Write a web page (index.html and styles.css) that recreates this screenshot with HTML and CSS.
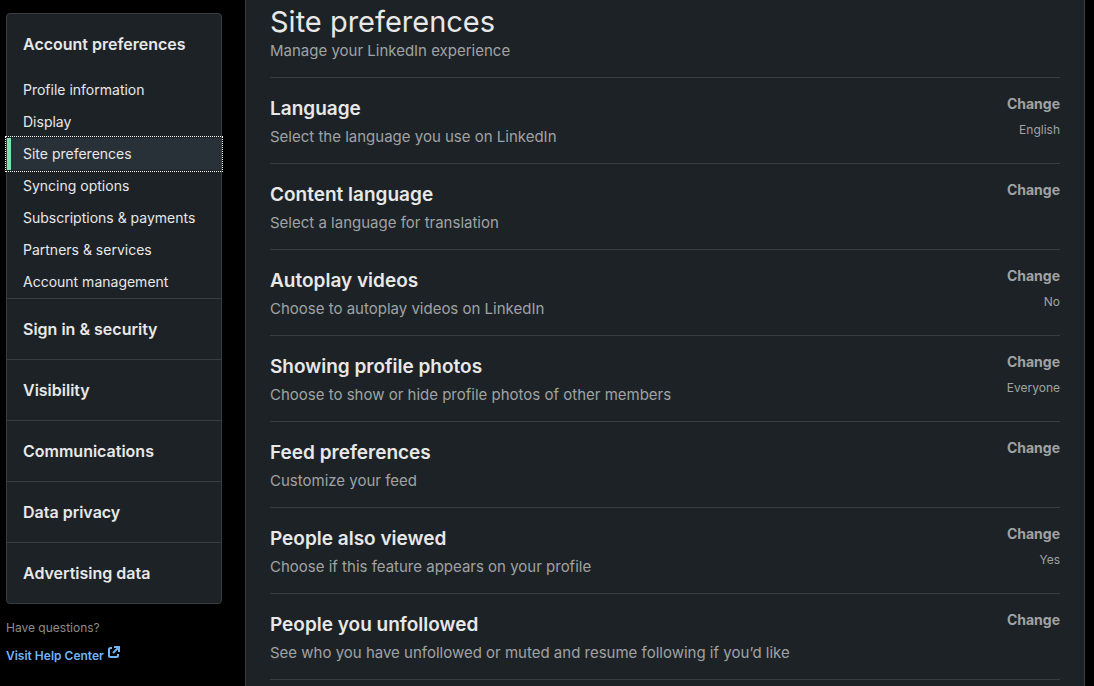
FILE: index.html
```html
<!DOCTYPE html>
<html lang="en">
<head>
<meta charset="utf-8">
<meta name="viewport" content="width=device-width, initial-scale=1">
<title>Site preferences</title>
<link rel="stylesheet" href="styles.css">
</head>
<body>
<div class="layout">
  <aside class="sidebar">
    <nav class="menu" aria-label="Settings">
      <section class="group">
        <button class="group-title" type="button">Account preferences</button>
        <ul class="links">
          <li><a class="link" href="#profile">Profile information</a></li>
          <li><a class="link" href="#display">Display</a></li>
          <li><a class="link link-current" href="#site" aria-current="page">Site preferences</a></li>
          <li><a class="link" href="#syncing">Syncing options</a></li>
          <li><a class="link" href="#subscriptions">Subscriptions &amp; payments</a></li>
          <li><a class="link" href="#partners">Partners &amp; services</a></li>
          <li><a class="link" href="#account">Account management</a></li>
        </ul>
      </section>
      <section class="group"><button class="group-title" type="button">Sign in &amp; security</button></section>
      <section class="group"><button class="group-title" type="button">Visibility</button></section>
      <section class="group"><button class="group-title" type="button">Communications</button></section>
      <section class="group"><button class="group-title" type="button">Data privacy</button></section>
      <section class="group"><button class="group-title" type="button">Advertising data</button></section>
    </nav>
    <p class="help-note">Have questions?</p>
    <a class="help-link" href="#help">Visit Help Center<svg class="help-icon" viewBox="0 0 12 12" aria-hidden="true"><path d="M4 2H2.500Q1 2 1 3.500V9.500Q1 11 2.500 11H8.500Q10 11 10 9.500V8M6 1H11V6M10.500 1.500L5 7"/></svg></a>
  </aside>
  <main class="panel">
    <header class="panel-head">
      <h1 class="title">Site preferences</h1>
      <p class="desc">Manage your LinkedIn experience</p>
    </header>
    <section class="row">
      <div><h2 class="row-title">Language</h2><p class="desc">Select the language you use on LinkedIn</p></div>
      <div class="action"><button class="change" type="button">Change</button><span class="value">English</span></div>
    </section>
    <section class="row">
      <div><h2 class="row-title">Content language</h2><p class="desc">Select a language for translation</p></div>
      <div class="action"><button class="change" type="button">Change</button></div>
    </section>
    <section class="row">
      <div><h2 class="row-title">Autoplay videos</h2><p class="desc">Choose to autoplay videos on LinkedIn</p></div>
      <div class="action"><button class="change" type="button">Change</button><span class="value">No</span></div>
    </section>
    <section class="row">
      <div><h2 class="row-title">Showing profile photos</h2><p class="desc">Choose to show or hide profile photos of other members</p></div>
      <div class="action"><button class="change" type="button">Change</button><span class="value">Everyone</span></div>
    </section>
    <section class="row">
      <div><h2 class="row-title">Feed preferences</h2><p class="desc">Customize your feed</p></div>
      <div class="action"><button class="change" type="button">Change</button></div>
    </section>
    <section class="row">
      <div><h2 class="row-title">People also viewed</h2><p class="desc">Choose if this feature appears on your profile</p></div>
      <div class="action"><button class="change" type="button">Change</button><span class="value">Yes</span></div>
    </section>
    <section class="row">
      <div><h2 class="row-title">People you unfollowed</h2><p class="desc">See who you have unfollowed or muted and resume following if you’d like</p></div>
      <div class="action"><button class="change" type="button">Change</button></div>
    </section>
  </main>
</div>
</body>
</html>
```
FILE: styles.css
```css
* {
  box-sizing: border-box;
}

body {
  margin: 0;
  background: #000;
  color: #e8e8e8;
  font-family: Inter, "Liberation Sans", sans-serif;
}

h1, h2, p, ul {
  margin: 0;
  padding: 0;
}

button {
  border: 0;
  background: none;
  font-family: inherit;
  cursor: pointer;
}

.layout {
  display: grid;
  grid-template-columns: 216px 1fr;
  gap: 23px;
  min-height: 100vh;
  padding: 0 9px 0 6px;
}

.sidebar {
  padding-top: 13px;
}

.menu {
  border: 1px solid #383d40;
  border-radius: 4px;
  background: #1d2226;
}

.group + .group {
  border-top: 1px solid #383d40;
}

.group-title {
  display: block;
  width: 100%;
  height: 60px;
  padding: 0 16px;
  color: #e8e8e8;
  font-size: 16px;
  font-weight: 600;
  text-align: left;
}

.links {
  list-style: none;
}

.link {
  display: block;
  padding: 0 16px;
  color: #e8e8e8;
  font-size: 14px;
  line-height: 32px;
  text-decoration: none;
}

.link-current {
  padding-left: 12px;
  border-left: 4px solid #7ce3b0;
  background: #283038;
  outline: 1px dotted #fff;
  outline-offset: 1px;
}

.help-note {
  margin-top: 14px;
  color: #8c8c8c;
  font-size: 12px;
  line-height: 20px;
}

.help-link {
  display: flex;
  align-items: center;
  gap: 4px;
  margin-top: 8px;
  color: #70b5f9;
  font-size: 12px;
  font-weight: 600;
  line-height: 20px;
  text-decoration: none;
}

.help-icon {
  width: 12px;
  height: 12px;
  margin-bottom: 8px;
  fill: none;
  stroke: currentColor;
  stroke-width: 2;
}

.panel {
  padding: 0 24px;
  border: solid #383d40;
  border-width: 0 1px;
  background: #1d2226;
}

.panel-head {
  padding: 2px 0 16px;
  border-bottom: 1px solid #383d40;
}

.title {
  font-size: 29px;
  font-weight: 400;
  line-height: 39px;
}

.desc {
  color: #a0a2a4;
  font-size: 15px;
  line-height: 20px;
}

.row {
  display: flex;
  justify-content: space-between;
  gap: 16px;
  padding: 16px 0;
  border-bottom: 1px solid #383d40;
}

.row-title {
  margin-bottom: 4px;
  font-size: 19px;
  font-weight: 600;
  line-height: 29px;
}

.action {
  display: flex;
  flex-direction: column;
  align-items: flex-end;
  gap: 6px;
}

.change {
  padding: 0;
  color: #a0a2a4;
  font-size: 14px;
  font-weight: 700;
  line-height: 20px;
}

.value {
  color: #a0a2a4;
  font-size: 12px;
  line-height: 20px;
}
```
